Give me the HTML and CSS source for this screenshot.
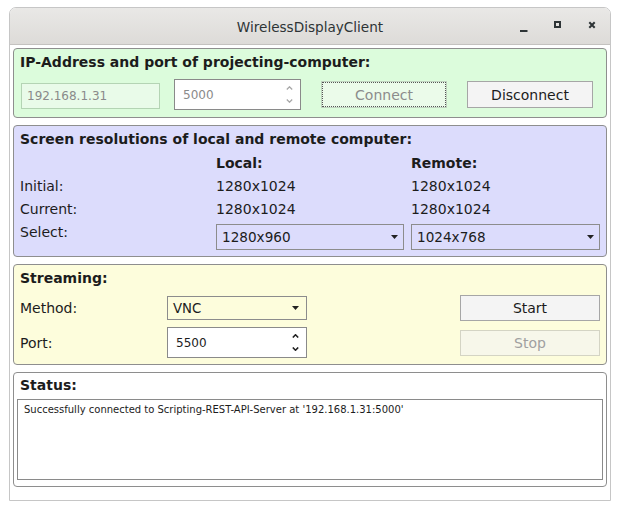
FILE: index.html
```html
<!DOCTYPE html>
<html>
<head>
<meta charset="utf-8">
<title>WirelessDisplayClient</title>
<link rel="stylesheet" href="styles.css">
</head>
<body>
<div class="window">
  <div class="titlebar">
    <div class="title">WirelessDisplayClient</div>
    <div class="controls">
      <span class="ctl"><svg width="12" height="12" viewBox="0 0 12 12"><rect x="2" y="10" width="7.5" height="2" fill="#2e3436"/></svg></span>
      <span class="ctl"><svg width="12" height="12" viewBox="0 0 12 12"><rect x="3" y="2" width="5" height="5" fill="none" stroke="#2e3436" stroke-width="2"/></svg></span>
      <span class="ctl"><svg width="12" height="12" viewBox="0 0 12 12"><path d="M3.3 2.3 L8.7 7.7 M8.7 2.3 L3.3 7.7" stroke="#2e3436" stroke-width="2" fill="none"/></svg></span>
    </div>
  </div>
  <div class="content">
    <section class="panel green">
      <div class="ph">IP-Address and port of projecting-computer:</div>
      <div class="iprow">
        <div class="ip">192.168.1.31</div>
        <div class="spin spin-disabled">
          <span>5000</span>
          <span class="arrows">
            <svg width="7" height="4" viewBox="0 0 7 4"><polyline points="0.8,3.5 3.5,0.8 6.2,3.5" fill="none" stroke="#a8a8a8" stroke-width="1.3"/></svg>
            <svg width="7" height="4" viewBox="0 0 7 4"><polyline points="0.8,0.5 3.5,3.2 6.2,0.5" fill="none" stroke="#a8a8a8" stroke-width="1.3"/></svg>
          </span>
        </div>
        <div class="btn btn-connect">Connect</div>
        <div class="btn btn-disc">Disconnect</div>
      </div>
    </section>

    <section class="panel blue">
      <div class="ph">Screen resolutions of local and remote computer:</div>
      <div class="resgrid">
        <div></div><div class="colh">Local:</div><div class="colh">Remote:</div>
        <div>Initial:</div><div>1280x1024</div><div>1280x1024</div>
        <div>Current:</div><div>1280x1024</div><div>1280x1024</div>
        <div class="sel-label">Select:</div>
        <div class="combo"><span>1280x960</span><svg width="7" height="4" viewBox="0 0 7 4"><polygon points="0,0 7,0 3.5,4" fill="#222"/></svg></div>
        <div class="combo"><span>1024x768</span><svg width="7" height="4" viewBox="0 0 7 4"><polygon points="0,0 7,0 3.5,4" fill="#222"/></svg></div>
      </div>
    </section>

    <section class="panel yellow">
      <div class="ph">Streaming:</div>
      <div class="streamgrid">
        <div>Method:</div>
        <div class="combo combo-small"><span>VNC</span><svg width="7" height="4" viewBox="0 0 7 4"><polygon points="0,0 7,0 3.5,4" fill="#222"/></svg></div>
        <div></div>
        <div class="btn btn-start">Start</div>
        <div>Port:</div>
        <div class="spin spin-port">
          <span>5500</span>
          <span class="arrows">
            <svg width="7" height="4" viewBox="0 0 7 4"><polyline points="0.8,3.5 3.5,0.8 6.2,3.5" fill="none" stroke="#222" stroke-width="1.6"/></svg>
            <svg width="7" height="4" viewBox="0 0 7 4"><polyline points="0.8,0.5 3.5,3.2 6.2,0.5" fill="none" stroke="#222" stroke-width="1.6"/></svg>
          </span>
        </div>
        <div></div>
        <div class="btn btn-stop">Stop</div>
      </div>
    </section>

    <section class="panel status">
      <div class="ph status-h">Status:</div>
      <div class="statusbox">Successfully connected to Scripting-REST-API-Server at '192.168.1.31:5000'</div>
    </section>
  </div>
</div>
</body>
</html>
```

FILE: styles.css
```css
body {
  margin: 0;
  background: #ffffff;
  font-family: "DejaVu Sans", sans-serif;
  font-size: 14px;
  color: #1c1c1c;
}

.window {
  margin: 7px 0 0 9px;
  width: 602px;
  height: 494px;
  box-sizing: border-box;
  border: 1px solid #c6c6c6;
  border-radius: 7px 7px 0 0;
  background: #ffffff;
  display: flex;
  flex-direction: column;
  overflow: hidden;
}

.titlebar {
  flex: none;
  height: 36px;
  background: linear-gradient(#e9e8e6, #dddbd8);
  border-bottom: 1px solid #c4c2bf;
  display: grid;
  grid-template-columns: 1fr auto 1fr;
  align-items: center;
}

.title {
  grid-column: 2;
  font-size: 13.6px;
  color: #2e3436;
  padding-top: 2px;
}

.controls {
  grid-column: 3;
  justify-self: end;
  display: flex;
  padding-right: 1px;
}

.ctl {
  width: 34px;
  height: 36px;
  display: flex;
  align-items: center;
  justify-content: center;
}

.content {
  padding: 3px;
  display: flex;
  flex-direction: column;
  gap: 7px;
}

.panel {
  border: 1px solid #8e8e8e;
  border-radius: 4px;
  padding: 5px 6px 6px 6px;
}

.green { background: #dcfcdc; padding-bottom: 7px; }
.blue { background: #dcdcfc; }
.yellow { background: #fdfddc; }
.status { background: #ffffff; padding: 4px 3px 6px 3px; }

.ph {
  font-weight: bold;
  font-size: 14px;
  line-height: 17px;
}

/* IP row */
.iprow {
  margin-top: 8px;
  height: 31px;
  display: flex;
  align-items: center;
}

.ip {
  box-sizing: border-box;
  margin-left: 1px;
  width: 139px;
  height: 26px;
  align-self: flex-start;
  margin-top: 4px;
  border: 1px solid #b4d4b4;
  background: #e9fbe9;
  color: #8a8a8a;
  font-size: 12px;
  padding-left: 5px;
  display: flex;
  align-items: center;
}

.spin {
  box-sizing: border-box;
  height: 31px;
  background: #ffffff;
  border: 1px solid #8a8a8a;
  display: flex;
  align-items: center;
  justify-content: space-between;
  font-size: 12px;
  padding: 0 7px 0 8px;
}

.spin-disabled {
  margin-left: 14px;
  width: 127px;
  color: #8a8a8a;
}

.spin-port {
  width: 140px;
  color: #1c1c1c;
}

.arrows {
  display: flex;
  flex-direction: column;
  gap: 9px;
}

.arrows svg { display: block; }

.btn {
  box-sizing: border-box;
  width: 126px;
  height: 27px;
  border: 1px solid #a6a6a6;
  background: #f4f4f4;
  display: flex;
  align-items: center;
  justify-content: center;
  font-size: 14px;
  color: #1c1c1c;
}

.btn-connect {
  margin-left: 20px;
  background: #ebfbea;
  border-color: #c0d2c0;
  color: #8c8c8c;
  outline: 1px dotted #555555;
  outline-offset: -2px;
}

.btn-disc { margin-left: 20px; }

/* resolutions grid */
.resgrid {
  margin-top: 3px;
  display: grid;
  grid-template-columns: 189px 188px 189px;
  grid-template-rows: 23px 23px 23px 30px;
  column-gap: 7px;
  align-items: center;
}

.colh { font-weight: bold; }

.sel-label {
  align-self: start;
  line-height: 17px;
  margin-top: 4px;
}

.resgrid .combo { align-self: end; }

.combo {
  box-sizing: border-box;
  height: 26px;
  border: 1px solid #8c8c8c;
  display: flex;
  align-items: center;
  justify-content: space-between;
  padding: 0 5px 0 5px;
  font-size: 13.6px;
}

.combo svg { display: block; }

.combo-small {
  height: 24px;
  padding-right: 7px;
  font-size: 13.3px;
}

/* streaming grid */
.streamgrid {
  margin-top: 8px;
  display: grid;
  grid-template-columns: 147px 140px 1fr 140px;
  grid-template-rows: 26px 31px;
  row-gap: 6px;
  align-items: center;
}

.btn-start {
  width: 140px;
  height: 26px;
}

.btn-stop {
  width: 140px;
  height: 26px;
  background: #f7f7ea;
  border-color: #d4d4c4;
  color: #a0a0a0;
}

/* status */
.status-h { padding-left: 3px; }

.statusbox {
  margin-top: 5px;
  box-sizing: border-box;
  height: 81px;
  border: 1px solid #8a8a8a;
  background: #ffffff;
  padding: 4px 6px;
  font-size: 10px;
  line-height: 12px;
  color: #1c1c1c;
}
```
